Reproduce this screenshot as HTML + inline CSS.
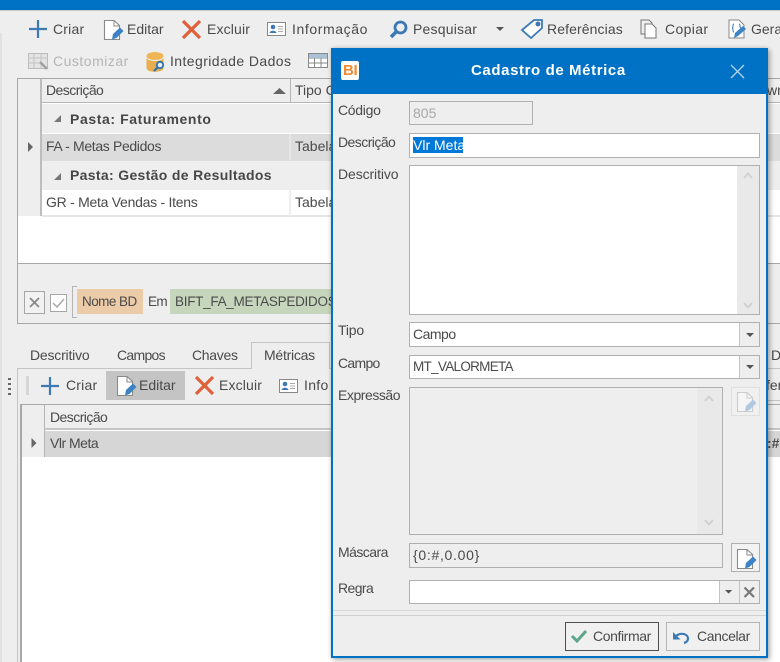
<!DOCTYPE html>
<html><head><meta charset="utf-8"><style>
html,body{margin:0;padding:0}
html{background:#eee}
body{width:780px;height:662px;position:relative;overflow:hidden;background:#eee;font:14px "Liberation Sans",sans-serif;color:#4a4a4a;filter:blur(.3px)}
.t{position:absolute;white-space:nowrap;line-height:18px;height:18px}
.b{position:absolute;box-sizing:border-box}
.w{font-weight:bold;color:#474747}
svg{position:absolute;left:0;top:0;overflow:visible}
</style></head><body>
<div class="b" style="left:0;top:0;width:780px;height:10px;background:#0072c6"></div>
<div class="b" style="left:0;top:10px;width:780px;height:1px;background:#c9c9c9"></div>
<div class="b" style="left:0;top:33px;width:2px;height:629px;background:#e2e2e2"></div>

<span class="t" style="left:53px;top:20px;letter-spacing:.2px">Criar</span>
<span class="t" style="left:127px;top:20px">Editar</span>
<span class="t" style="left:207px;top:20px;letter-spacing:.15px">Excluir</span>
<span class="t" style="left:292px;top:20px;letter-spacing:.6px">Informação</span>
<span class="t" style="left:413px;top:20px;letter-spacing:.2px">Pesquisar</span>
<span class="t" style="left:547px;top:20px;letter-spacing:.1px">Referências</span>
<span class="t" style="left:665px;top:20px;letter-spacing:.35px">Copiar</span>
<span class="t" style="left:751px;top:20px">Gerar</span>
<span class="t" style="left:53px;top:52px;color:#b5b5b5;letter-spacing:.5px">Customizar</span>
<span class="t" style="left:170px;top:52px;letter-spacing:.41px">Integridade Dados</span>

<!-- top grid -->
<div class="b" style="left:17px;top:78px;width:763px;height:246px;background:#fff;border:solid #a8a8a8;border-width:1px 0 1px 1px"></div>
<div class="b" style="left:18px;top:79px;width:762px;height:24px;background:#eee;border-bottom:1px solid #b5b5b5"></div>
<div class="b" style="left:18px;top:79px;width:23px;height:137px;background:#eee"></div>
<div class="b" style="left:40px;top:79px;width:2px;height:137px;background:#bdbdbd"></div>
<div class="b" style="left:290px;top:79px;width:1px;height:24px;background:#b5b5b5"></div>
<span class="t" style="left:46px;top:81px;letter-spacing:-.55px">Descrição</span>
<span class="t" style="left:295px;top:81px">Tipo C</span>
<div class="b" style="left:42px;top:104px;width:738px;height:29px;background:#eee"></div>
<span class="t w" style="left:70px;top:110px;letter-spacing:.6px">Pasta: Faturamento</span>
<div class="b" style="left:42px;top:134px;width:738px;height:27px;background:#dcdcdc"></div>
<div class="b" style="left:289px;top:134px;width:2px;height:26px;background:#e6e6e6"></div>
<span class="t" style="left:46px;top:137px;letter-spacing:-.35px">FA - Metas Pedidos</span>
<span class="t" style="left:295px;top:137px">Tabela</span>
<div class="b" style="left:42px;top:161px;width:738px;height:29px;background:#eee"></div>
<span class="t w" style="left:70px;top:166px;letter-spacing:.33px">Pasta: Gestão de Resultados</span>
<div class="b" style="left:289px;top:190px;width:2px;height:26px;background:#eee"></div>
<div class="b" style="left:42px;top:215px;width:738px;height:2px;background:#e6e6e6"></div>
<span class="t" style="left:46px;top:193px;letter-spacing:-.27px">GR - Meta Vendas - Itens</span>
<span class="t" style="left:295px;top:193px">Tabela</span>
<div class="b" style="left:18px;top:263px;width:762px;height:60px;background:#eee;border-top:1px solid #a8a8a8"></div>

<!-- filter -->
<div class="b" style="left:24px;top:291px;width:21px;height:23px;border:1px solid #a6a6a6;background:#f2f2f2"></div>
<div class="b" style="left:50px;top:294px;width:17px;height:18px;border:1px solid #a6a6a6;background:#fff"></div>
<div class="b" style="left:72px;top:286px;width:5px;height:32px;border:solid #b5b5b5;border-width:1px 0 1px 1px"></div>
<div class="b" style="left:77px;top:289px;width:66px;height:25px;background:#eccba8"></div>
<span class="t" style="left:82px;top:293px;font-size:13.5px;letter-spacing:-.55px">Nome BD</span>
<span class="t" style="left:148px;top:293px;font-size:13.5px;letter-spacing:-.6px">Em</span>
<div class="b" style="left:170px;top:289px;width:165px;height:25px;background:#c5d6bd"></div>
<span class="t" style="left:175px;top:293px;font-size:13.5px;letter-spacing:-.28px">BIFT_FA_METASPEDIDOS</span>

<!-- tabs -->
<span class="t" style="left:30px;top:346px;letter-spacing:-.2px">Descritivo</span>
<span class="t" style="left:117px;top:346px;letter-spacing:-.7px">Campos</span>
<span class="t" style="left:192px;top:346px;letter-spacing:-.3px">Chaves</span>
<div class="b" style="left:17px;top:368px;width:763px;height:294px;border:solid #c4c4c4;border-width:1px 0 0 1px"></div>
<div class="b" style="left:251px;top:342px;width:79px;height:27px;background:#eee;border:solid #c4c4c4;border-width:1px 1px 0 1px"></div>
<span class="t" style="left:264px;top:346px;letter-spacing:-.25px">Métricas</span>
<span class="t" style="left:771px;top:346px">D</span>
<span class="t" style="left:766px;top:376px">fer</span>
<span class="t" style="left:766px;top:407px">ás</span>
<span class="t" style="left:767px;top:81px">wr</span>

<div class="b" style="left:8px;top:378px;width:3px;height:17px;background:repeating-linear-gradient(#666 0 2px,transparent 2px 5px)"></div>
<div class="b" style="left:26px;top:376px;width:3px;height:19px;background:#d6d6d6"></div>
<span class="t" style="left:66px;top:376px;letter-spacing:.2px">Criar</span>
<div class="b" style="left:106px;top:371px;width:79px;height:29px;background:#c4c4c4"></div>
<span class="t" style="left:139px;top:376px">Editar</span>
<span class="t" style="left:219px;top:376px;letter-spacing:.15px">Excluir</span>
<span class="t" style="left:304px;top:376px;letter-spacing:.3px">Info</span>

<!-- bottom grid -->
<div class="b" style="left:20px;top:404px;width:760px;height:258px;background:#fff;border:solid #a8a8a8;border-width:1px 0 0 2px"></div>
<div class="b" style="left:22px;top:405px;width:758px;height:25px;background:#eee;border-bottom:2px solid #c4c4c4"></div>
<div class="b" style="left:22px;top:405px;width:22px;height:52px;background:#eee"></div>
<div class="b" style="left:44px;top:405px;width:1px;height:52px;background:#b5b5b5"></div>
<span class="t" style="left:50px;top:408px;letter-spacing:-.55px">Descrição</span>
<div class="b" style="left:45px;top:431px;width:735px;height:26px;background:#d6d6d6"></div>
<span class="t" style="left:50px;top:434px;letter-spacing:-.5px">Vlr Meta</span>
<span class="t" style="left:767px;top:434px;font-weight:bold">:#</span>
<div class="b" style="left:768px;top:368px;width:12px;height:1px;background:#c4c4c4"></div>
<div class="b" style="left:768px;top:400px;width:12px;height:1px;background:#c4c4c4"></div>

<!-- dialog -->
<div class="b" style="left:331px;top:48px;width:437px;height:610px;background:#eee;border:2px solid #0072c6;border-top:0;box-shadow:2px 2px 5px rgba(0,0,0,.28),0 0 4px rgba(0,0,0,.15)"></div>
<div class="b" style="left:331px;top:48px;width:437px;height:46px;background:#0072c6"></div>
<div class="b" style="left:341px;top:61px;width:18px;height:19px;background:#fff;border-radius:2px"></div>
<span class="t" style="left:343px;top:61px;color:#f58a30;font-weight:bold;font-size:15px;line-height:19px;height:19px;letter-spacing:-.3px">BI</span>
<span class="t" style="left:471px;top:62px;color:#fff;font-weight:bold;font-size:15px;letter-spacing:.6px">Cadastro de Métrica</span>

<span class="t" style="left:338px;top:101px;letter-spacing:-.3px">Código</span>
<span class="t" style="left:338px;top:133px;letter-spacing:-.55px">Descrição</span>
<span class="t" style="left:338px;top:165px;letter-spacing:-.1px">Descritivo</span>
<span class="t" style="left:338px;top:321px;letter-spacing:-.2px">Tipo</span>
<span class="t" style="left:338px;top:354px;letter-spacing:-.7px">Campo</span>
<span class="t" style="left:338px;top:386px;letter-spacing:-.45px">Expressão</span>
<span class="t" style="left:338px;top:543px;letter-spacing:-.55px">Máscara</span>
<span class="t" style="left:338px;top:579px;letter-spacing:-.6px">Regra</span>

<div class="b" style="left:409px;top:101px;width:124px;height:24px;border:1px solid #b0b0b0;background:#eee"></div>
<span class="t" style="left:413px;top:104px;color:#a8a8a8">805</span>
<div class="b" style="left:409px;top:133px;width:351px;height:25px;border:1px solid #b0b0b0;background:#fff"></div>
<div class="b" style="left:413px;top:137px;width:50px;height:16px;background:#0078d7"></div>
<span class="t" style="left:413px;top:136px;color:#fff">Vlr Meta</span>

<div class="b" style="left:409px;top:165px;width:351px;height:150px;border:1px solid #b0b0b0;background:#fff"></div>
<div class="b" style="left:737px;top:166px;width:22px;height:148px;background:#e9e9e9"></div>

<div class="b" style="left:409px;top:322px;width:351px;height:25px;border:1px solid #b0b0b0;background:#fff"></div>
<div class="b" style="left:739px;top:323px;width:20px;height:23px;background:#eee;border-left:1px solid #c4c4c4"></div>
<span class="t" style="left:413px;top:325px;letter-spacing:-.5px">Campo</span>
<div class="b" style="left:409px;top:355px;width:351px;height:24px;border:1px solid #b0b0b0;background:#fff"></div>
<div class="b" style="left:739px;top:356px;width:20px;height:22px;background:#eee;border-left:1px solid #c4c4c4"></div>
<span class="t" style="left:413px;top:358px;font-size:13.5px;letter-spacing:-.7px">MT_VALORMETA</span>

<div class="b" style="left:409px;top:387px;width:314px;height:148px;border:1px solid #b0b0b0;background:#eee"></div>
<div class="b" style="left:697px;top:388px;width:25px;height:146px;background:#e9e9e9"></div>
<div class="b" style="left:731px;top:387px;width:29px;height:29px;border:1px solid #e0e0e0;background:#f0f0f0"></div>

<div class="b" style="left:409px;top:543px;width:314px;height:25px;border:1px solid #b0b0b0;background:#eee"></div>
<span class="t" style="left:413px;top:546px;letter-spacing:.7px">{0:#,0.00}</span>
<div class="b" style="left:731px;top:543px;width:29px;height:29px;border:1px solid #b0b0b0;background:#f2f2f2"></div>

<div class="b" style="left:409px;top:580px;width:351px;height:24px;border:1px solid #b0b0b0;background:#fff"></div>
<div class="b" style="left:719px;top:581px;width:40px;height:22px;background:#eee;border-left:1px solid #c4c4c4"></div>
<div class="b" style="left:739px;top:581px;width:1px;height:22px;background:#c4c4c4"></div>

<div class="b" style="left:333px;top:610px;width:433px;height:1px;background:#d8d8d8"></div>
<div class="b" style="left:333px;top:615px;width:433px;height:1px;background:#d0d0d0"></div>

<div class="b" style="left:565px;top:622px;width:94px;height:29px;border:1px solid #4f4f4f;background:#f0f0f0"></div>
<span class="t" style="left:593px;top:627px;letter-spacing:-.4px">Confirmar</span>
<div class="b" style="left:666px;top:622px;width:94px;height:29px;border:1px solid #b5b5b5;background:#f0f0f0"></div>
<span class="t" style="left:697px;top:627px;letter-spacing:-.4px">Cancelar</span>

<svg width="780" height="662" viewBox="0 0 780 662" fill="none">
<defs>
<g id="plus"><path d="M0 9H18M9 0V18" stroke="#3d7ab5" stroke-width="2.2"/></g>
<g id="x"><path d="M1 1L18 18M18 1L1 18" stroke="#e0603a" stroke-width="3.2"/></g>
<g id="edit"><path d="M.5 .5H10L15.500 5.500V19.500H.5Z" fill="#fff" stroke="#8a8a8a" stroke-width="1.100"/><path d="M10 1V6H15" stroke="#8a8a8a"/><path d="M9 14L16 7.500L19.500 11L12.500 18L8 19.500Z" fill="#3c82c4"/></g>
<g id="info"><rect x=".5" y=".5" width="18" height="13" stroke="#888" fill="#fff"/><circle cx="6" cy="5" r="2.3" fill="#3c78b4"/><path d="M2.5 11C3 8 9 8 9.5 11Z" fill="#3c78b4"/><path d="M11 4.5H16M11 7H16M11 9.5H16" stroke="#aaa"/></g>
<g id="caret"><path d="M0 0H8L4 4Z" fill="#555"/></g>
</defs>
<use href="#plus" x="29" y="20"/>
<use href="#edit" x="104" y="20"/>
<use href="#x" x="182" y="20"/>
<use href="#info" x="267" y="22"/>
<circle cx="400.500" cy="27.500" r="5.500" stroke="#3c78b4" stroke-width="2.800"/><path d="M396 32L391 37" stroke="#3c78b4" stroke-width="3.500"/>
<use href="#caret" x="496" y="27"/>
<path d="M522 30L534 20H542V28L531 38Z" stroke="#3d7ab5" stroke-width="1.800" fill="#fff"/><circle cx="538" cy="24" r="2.500" fill="#3d7ab5"/>
<path d="M645 24H652L656 28V38H645Z" stroke="#777" fill="#fff"/><path d="M645 34H641V20H649L652 23V24" stroke="#777"/>
<path d="M729 20H739L744 25V38H729Z" stroke="#888" fill="#fff"/><path d="M734 24C732 24 734 28 732 28C734 28 732 32 734 32M739 24C741 24 739 28 741 28" stroke="#3c78b4"/><path d="M735 33L743 26L746 29L738 36L734 38Z" fill="#3c82c4"/>
<g stroke="#bbb" fill="#e4e4e4"><rect x="28.500" y="53.500" width="19" height="15"/></g><path d="M28 58H48M34 54V68M41 54V68M28 63H40" stroke="#c4c4c4"/><path d="M40 62L47 69" stroke="#a0a0a0" stroke-width="2.500"/>
<ellipse cx="155" cy="56" rx="8.500" ry="4" fill="#eeb555"/><path d="M146.500 58V68C146.500 73 163.500 73 163.500 68V58C161 62 149 62 146.500 58Z" fill="#e8ad4c"/><circle cx="160" cy="65" r="3.200" stroke="#2e72b0" stroke-width="1.800" fill="#eee"/><path d="M158 67L154 71" stroke="#2e72b0" stroke-width="2.200"/>
<rect x="308.500" y="53.500" width="19" height="14" stroke="#888" fill="#fff"/><path d="M308 58H328M308 63H328M314.500 54V67M321 54V67" stroke="#888"/><rect x="309" y="54" width="18" height="4" fill="#a9c0d8"/>
<path d="M273 94H286L279.500 88Z" fill="#666"/>
<path d="M61 122V115L54 122Z" fill="#777"/>
<path d="M61 180V173L54 180Z" fill="#777"/>
<path d="M28 142L33 147L28 152Z" fill="#666"/>
<path d="M31.500 438L36.500 443L31.500 448Z" fill="#666"/>
<path d="M30 298L39 307M39 298L30 307" stroke="#8a8a8a" stroke-width="1.800"/>
<path d="M53 303L57 307L64 299" stroke="#a8a8a8" stroke-width="1.500"/>
<use href="#plus" x="41" y="377"/>
<use href="#edit" x="117" y="376"/>
<use href="#x" x="195" y="376"/>
<use href="#info" x="279" y="379"/>
<path d="M731 65L744 78M744 65L731 78" stroke="#b5d2ea" stroke-width="1.300"/>
<path d="M744 178L748 173.500L752 178M744 303L748 307.500L752 303" stroke="#d0d0d0" stroke-width="1.800"/>
<path d="M705 401L709 396.500L713 401M705 520L709 524.500L713 520" stroke="#d0d0d0" stroke-width="1.800"/>
<use href="#caret" x="746" y="333"/>
<use href="#caret" x="746" y="365"/>
<use href="#caret" transform="translate(725 590) scale(.9)"/>
<path d="M744.500 587.500L754 597M754 587.500L744.500 597" stroke="#777" stroke-width="2.200"/>
<g opacity=".35"><use href="#edit" x="737" y="392"/></g>
<use href="#edit" x="737" y="549"/>
<path d="M572 636L577 641L586 631" stroke="#5ea58a" stroke-width="3"/>
<path d="M673 632V639.500H680.500Z" fill="#3d7ab5"/><path d="M676 636C681 632 688 634 688 638.500C688 641 686 642.500 684 643" stroke="#3d7ab5" stroke-width="2.200"/>
</svg>
</body></html>
